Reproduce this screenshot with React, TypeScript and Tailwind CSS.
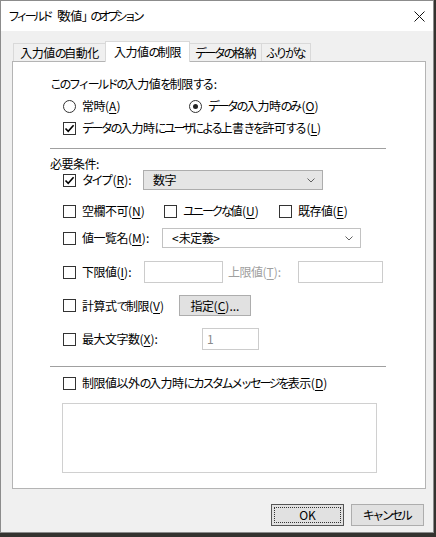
import React from "react";

const FONT = "font-['Noto_Sans_CJK_JP',sans-serif]";

/* Noto's kana are full-width; the dialog font has narrow ones, so kana runs get tighter spacing */
function J({ t, tight = false }: { t: string; tight?: boolean }) {
    const parts = t.split(/([\u3000-\u30ff]+)/).filter((p) => p !== "");
    const last = parts.length - 1;
    return (
        <>
            {parts.map((p, i) =>
                /[\u3000-\u30ff]/.test(p) ? (
                    <span
                        key={i}
                        className={`${tight ? "tracking-[-3.5px]" : "tracking-[-2.5px]"} ${i === last ? "mr-[2px]" : ""}`}
                    >
                        {p}
                    </span>
                ) : (
                    <span key={i} className="tracking-[-0.5px]">
                        {p}
                    </span>
                )
            )}
        </>
    );
}

function Check({ checked = false }: { checked?: boolean }) {
    return (
        <span className="flex h-[13px] w-[13px] shrink-0 items-center justify-center border border-[#333333] bg-white">
            {checked && (
                <svg width="11" height="11" viewBox="0 0 11 11">
                    <path d="M1.5 5.5 L4.2 8.3 L9.6 2.2" fill="none" stroke="#000" strokeWidth="1.6" />
                </svg>
            )}
        </span>
    );
}

function Radio({ selected = false }: { selected?: boolean }) {
    return (
        <span className="flex h-[13px] w-[13px] shrink-0 items-center justify-center rounded-full border border-[#333333] bg-white">
            {selected && <span className="h-[5px] w-[5px] rounded-full bg-[#222222]" />}
        </span>
    );
}

function Chevron() {
    return (
        <svg width="8" height="5" viewBox="0 0 8 5">
            <path d="M0.5 0.5 L4 4 L7.5 0.5" fill="none" stroke="#606060" strokeWidth="1" />
        </svg>
    );
}

function Mn({ c }: { c: string }) {
    return <u className="underline-offset-[2px]">{c}</u>;
}

/* checkbox + label, in a box whose width sets where the next control starts */
function CheckItem({ label, mn, tail = "", checked = false, className = "" }: { label: string; mn: string; tail?: string; checked?: boolean; className?: string }) {
    return (
        <div className={`flex items-center gap-[6px] ${className}`}>
            <Check checked={checked} />
            <span className="whitespace-nowrap">
                <J t={label} />(<Mn c={mn} />){tail}
            </span>
        </div>
    );
}

export default function App() {
    return (
        <div className={`h-[537px] w-[436px] overflow-hidden bg-[#34332f] text-[12px] leading-none text-black ${FONT}`}>
            <div className="flex h-[533px] w-[434px] flex-col border border-[#8c8c8c] bg-[#f0f0f0]">
                {/* Title bar */}
                <div className="flex h-[30px] shrink-0 items-center justify-between bg-white pl-[7px] pr-[8px]">
                    <span className="whitespace-nowrap">
                        <J t="フィールド「数値」のオプション" tight />
                    </span>
                    <svg width="11" height="11" viewBox="0 0 11 11">
                        <path d="M0.5 0.5 L10.5 10.5 M10.5 0.5 L0.5 10.5" stroke="#111" strokeWidth="1" />
                    </svg>
                </div>

                {/* Tabs */}
                <div className="ml-[12px] mt-[10px] flex h-[20px] items-end whitespace-nowrap">
                    <div className="flex h-[18px] w-[92px] items-center justify-center border-l border-t border-[#d9d9d9]">
                        <J t="入力値の自動化" />
                    </div>
                    <div className="relative z-10 -mb-[1px] flex h-[21px] w-[85px] items-center justify-center border-l border-r border-t border-[#d9d9d9] bg-white pb-[1px]">
                        <J t="入力値の制限" />
                    </div>
                    <div className="flex h-[18px] w-[72px] items-center justify-center border-r border-t border-[#d9d9d9]">
                        <J t="データの格納" />
                    </div>
                    <div className="flex h-[18px] w-[49px] items-center justify-center border-r border-t border-[#d9d9d9]">
                        <J t="ふりがな" />
                    </div>
                </div>

                {/* Panel */}
                <div className="ml-[11px] flex h-[428px] w-[414px] flex-col border border-[#b4b4b4] bg-white">
                    <div className="ml-[37px] mt-[11px] flex h-[22px] items-center whitespace-nowrap">
                        <J t="このフィールドの入力値を制限する" />:
                    </div>

                    <div className="ml-[50px] flex h-[22px] items-center whitespace-nowrap">
                        <div className="flex w-[126px] items-center gap-[6px]">
                            <Radio />
                            <span>
                                <J t="常時" />(<Mn c="A" />)
                            </span>
                        </div>
                        <div className="flex items-center gap-[6px]">
                            <Radio selected />
                            <span>
                                <J t="データの入力時のみ" />(<Mn c="O" />)
                            </span>
                        </div>
                    </div>

                    <div className="ml-[50px] flex h-[22px] items-center">
                        <CheckItem label="データの入力時にユーザによる上書きを許可する" mn="L" checked />
                    </div>

                    <div className="ml-[37px] mt-[9px] h-px w-[336px] bg-[#a0a0a0]" />

                    <div className="ml-[37px] mt-[8px] flex h-[13px] items-center">
                        <J t="必要条件" />:
                    </div>

                    <div className="ml-[50px] flex h-[20px] items-center">
                        <CheckItem label="タイプ" mn="R" tail=":" checked className="w-[80px]" />
                        <div className="flex h-[20px] w-[180px] items-center justify-between border border-[#adadad] bg-[#e5e5e5] pl-[9px] pr-[7px]">
                            <span>
                                <J t="数字" />
                            </span>
                            <Chevron />
                        </div>
                    </div>

                    <div className="ml-[50px] mt-[11px] flex h-[20px] items-center">
                        <CheckItem label="空欄不可" mn="N" className="w-[101px]" />
                        <CheckItem label="ユニークな値" mn="U" className="w-[115px]" />
                        <CheckItem label="既存値" mn="E" />
                    </div>

                    <div className="ml-[50px] mt-[7px] flex h-[20px] items-center">
                        <CheckItem label="値一覧名" mn="M" tail=":" className="w-[99px]" />
                        <div className="flex h-[20px] w-[199px] items-center justify-between border border-[#c2c2c2] bg-white pl-[9px] pr-[7px]">
                            <span>
                                &lt;<J t="未定義" />&gt;
                            </span>
                            <Chevron />
                        </div>
                    </div>

                    <div className="ml-[50px] mt-[13px] flex h-[22px] items-center">
                        <CheckItem label="下限値" mn="I" tail=":" className="w-[81px]" />
                        <div className="h-[22px] w-[79px] border border-[#cccccc] bg-white" />
                        <span className="ml-[5px] w-[70px] whitespace-nowrap text-[#a0a0a0]">
                            <J t="上限値" />(<Mn c="T" />):
                        </span>
                        <div className="h-[22px] w-[85px] border border-[#cccccc] bg-white" />
                    </div>

                    <div className="ml-[50px] mt-[12px] flex h-[21px] items-center">
                        <CheckItem label="計算式で制限" mn="V" className="w-[116px]" />
                        <div className="flex h-[21px] w-[72px] items-center justify-center whitespace-nowrap border border-[#adadad] bg-[#e1e1e1]">
                            <J t="指定" />(<Mn c="C" />)...
                        </div>
                    </div>

                    <div className="ml-[50px] mt-[12px] flex h-[22px] items-center">
                        <CheckItem label="最大文字数" mn="X" tail=":" className="w-[139px]" />
                        <div className="flex h-[22px] w-[57px] items-center border border-[#cccccc] bg-white pl-[4px] text-[#8a8a8a]">1</div>
                    </div>

                    <div className="ml-[37px] mt-[16px] h-px w-[336px] bg-[#a0a0a0]" />

                    <div className="ml-[50px] mt-[6px] flex h-[20px] items-center">
                        <CheckItem label="制限値以外の入力時にカスタムメッセージを表示" mn="D" />
                    </div>

                    <div className="ml-[49px] mt-[10px] h-[70px] w-[315px] border border-[#d0d0d0] bg-white" />
                </div>

                {/* Buttons */}
                <div className="mr-[9px] mt-[15px] flex justify-end gap-[7px]">
                    <div className="flex h-[22px] w-[73px] items-center justify-center border border-[#555555] bg-[#e1e1e1] p-[2px]">
                        <div className="flex h-full w-full items-center justify-center border border-dotted border-[#333333]">OK</div>
                    </div>
                    <div className="flex h-[22px] w-[73px] items-center justify-center border border-[#adadad] bg-[#e1e1e1]">
                        <J t="キャンセル" />
                    </div>
                </div>
            </div>
        </div>
    );
}
